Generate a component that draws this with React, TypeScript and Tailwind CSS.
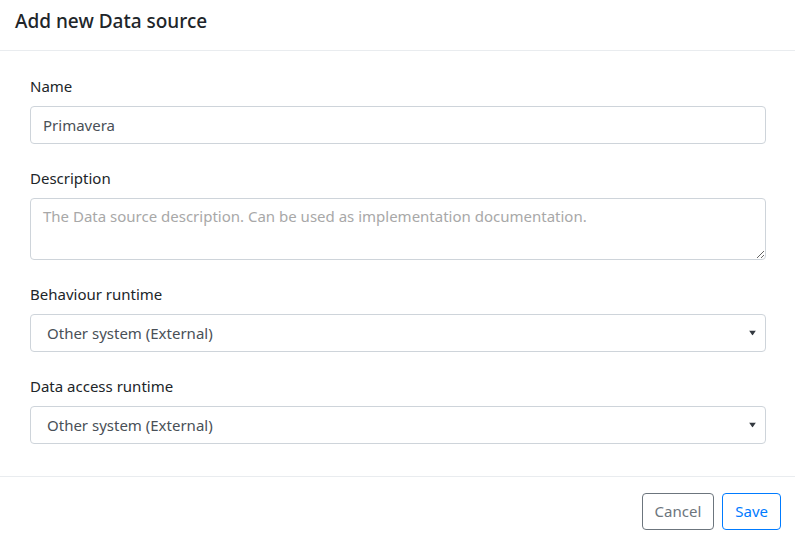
import { useState } from 'react';

const font = { fontFamily: '"Noto Sans", "Open Sans", sans-serif' };

function Caret() {
  return (
    <svg
      className="pointer-events-none absolute right-[10px] top-1/2 -translate-y-1/2"
      width="7"
      height="5"
      viewBox="0 0 7 5"
    >
      <path d="M0 0h7L3.5 5z" fill="#343a40" />
    </svg>
  );
}

function SelectField({ label, value, onChange }: { label: string; value: string; onChange: (v: string) => void }) {
  return (
    <div className="mb-[22px]">
      <label className="mb-2 block pt-px text-[15px] leading-[23px] text-[#212529]">{label}</label>
      <div className="relative">
        <select
          value={value}
          onChange={e => onChange(e.target.value)}
          className="h-[38px] w-full appearance-none rounded border border-[#ced4da] bg-white pl-4 pr-7 text-[15px] text-[#495057] outline-none"
          style={font}
        >
          <option>Other system (External)</option>
          <option>Internal</option>
        </select>
        <Caret />
      </div>
    </div>
  );
}

export default function App() {
  const [name, setName] = useState('Primavera');
  const [description, setDescription] = useState('');
  const [behaviour, setBehaviour] = useState('Other system (External)');
  const [dataAccess, setDataAccess] = useState('Other system (External)');

  return (
    <div className="h-[544px] w-[795px] bg-white" style={font}>
      {/* Header */}
      <div className="flex h-[51px] items-center border-b border-[#e9ecef] px-[15px] pb-[7px]">
        <h5 className="text-[19px] font-medium text-[#212529]">Add new Data source</h5>
      </div>

      {/* Body */}
      <div className="pl-[30px] pr-[29px] pt-[23px] pb-[10px]">
        <div className="mb-[22px]">
          <label className="mb-2 block pt-px text-[15px] leading-[23px] text-[#212529]">Name</label>
          <input
            value={name}
            onChange={e => setName(e.target.value)}
            className="h-[38px] w-full rounded border border-[#ced4da] px-3 text-[15px] text-[#495057] outline-none"
            style={font}
          />
        </div>

        <div className="mb-[22px]">
          <label className="mb-2 block pt-px text-[15px] leading-[23px] text-[#212529]">Description</label>
          <textarea
            value={description}
            onChange={e => setDescription(e.target.value)}
            placeholder="The Data source description. Can be used as implementation documentation."
            className="block h-[62px] w-full resize-y rounded border border-[#ced4da] px-3 py-[6px] text-[15px] text-[#495057] outline-none placeholder:text-[#a8a8a8]"
            style={font}
          />
        </div>

        <SelectField label="Behaviour runtime" value={behaviour} onChange={setBehaviour} />
        <SelectField label="Data access runtime" value={dataAccess} onChange={setDataAccess} />
      </div>

      {/* Footer */}
      <div className="flex justify-end gap-2 border-t border-[#e9ecef] px-[14px] pt-4">
        <button className="h-[37px] rounded border border-[#6c757d] px-3 text-[15px] text-[#6c757d]">Cancel</button>
        <button className="h-[37px] rounded border border-[#007bff] px-3 text-[15px] text-[#007bff]">Save</button>
      </div>
    </div>
  );
}
